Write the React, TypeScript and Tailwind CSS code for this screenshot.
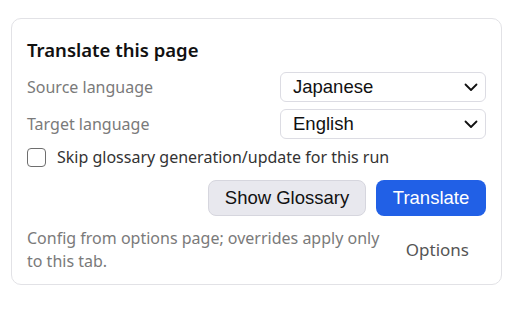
import React from "react";

function Chevron() {
  return (
    <svg width="14" height="9" viewBox="0 0 14 9" fill="none" className="shrink-0">
      <path d="M1.5 1.5 L7 7 L12.5 1.5" stroke="#111" strokeWidth="1.8" strokeLinecap="round" strokeLinejoin="round" />
    </svg>
  );
}

function Select({ value }: { value: string }) {
  return (
    <div className="flex h-[30px] w-[206px] items-center justify-between rounded-[6px] border border-[#dcdce3] bg-white pl-[12px] pr-[7px] text-[18.5px] text-[#111] [font-family:'Liberation_Sans',Arial,sans-serif]">
      <span>{value}</span>
      <Chevron />
    </div>
  );
}

export default function App() {
  return (
    <div className="min-h-[320px] w-[512px] bg-white pl-[11px] pr-[10px] pt-[18px] [font-family:'Noto_Sans',sans-serif]">
      <div className="h-[267px] rounded-[10px] border border-[#e2e2e6] px-[15px] pt-[18px]">
        <div className="text-[18.5px] font-semibold leading-[26px] text-[#111]">Translate this page</div>
        <div className="mt-[9px] flex items-center justify-between">
          <span className="text-[16px] text-[#7a7a7a]">Source language</span>
          <Select value="Japanese" />
        </div>
        <div className="mt-[7px] flex items-center justify-between">
          <span className="text-[16px] text-[#7a7a7a]">Target language</span>
          <Select value="English" />
        </div>
        <div className="mt-[8px] flex items-center gap-[11px]">
          <div className="h-[19px] w-[19px] rounded-[4px] border-[1.5px] border-[#6e6e6e] bg-white" />
          <span className="text-[16px] leading-[20px] text-[#333]">Skip glossary generation/update for this run</span>
        </div>
        <div className="mt-[13px] flex justify-end gap-[10px] [font-family:'Liberation_Sans',Arial,sans-serif]">
          <button className="h-[36px] w-[158px] rounded-[8px] border border-[#d6d6de] bg-[#e8e8ee] text-[18.5px] text-[#111]">Show Glossary</button>
          <button className="h-[36px] w-[110px] rounded-[8px] bg-[#2160e6] text-[18.5px] text-white">Translate</button>
        </div>
        <div className="mt-[11px] flex items-center justify-between">
          <div className="w-[362px] text-[16px] leading-[23px] text-[#7a7a7a]">
            Config from options page; overrides apply only to this tab.
          </div>
          <span className="mr-[17px] text-[17px] text-[#555]">Options</span>
        </div>
      </div>
    </div>
  );
}
